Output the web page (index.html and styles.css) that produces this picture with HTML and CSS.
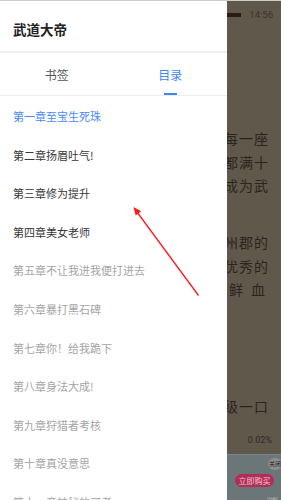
FILE: index.html
```html
<!DOCTYPE html>
<html>
<head>
<meta charset="utf-8">
<link rel="stylesheet" href="styles.css">
</head>
<body>

<div class="screen">
  <aside class="drawer">
    <div class="book-title">武道大帝</div>
    <div class="tabs">
      <div class="tab"><span class="tab-label">书签</span><span class="tab-bar"></span></div>
      <div class="tab active"><span class="tab-label">目录</span><span class="tab-bar"></span></div>
    </div>
    <ul class="chapters">
      <li class="current">第一章至宝生死珠</li>
      <li class="read">第二章扬眉吐气!</li>
      <li class="read">第三章修为提升</li>
      <li class="read">第四章美女老师</li>
      <li>第五章不让我进我便打进去</li>
      <li>第六章暴打黑石碑</li>
      <li>第七章你！给我跪下</li>
      <li>第八章身法大成!</li>
      <li>第九章狩猎者考核</li>
      <li>第十章真没意思</li>
      <li>第十一章神秘的买者</li>
    </ul>
  </aside>

  <main class="reader">
    <div class="status">
      <span class="battery"></span>
      <span class="clock">14:56</span>
    </div>

    <div class="para first">
      <div class="line"><span>城中每一座</span></div>
      <div class="line"><span>都满十</span></div>
      <div class="line"><span>够成为武</span></div>
    </div>
    <div class="para second">
      <div class="line"><span>九州郡的</span></div>
      <div class="line"><span>优秀的</span></div>
      <div class="line"><span class="spread">的鲜血</span></div>
    </div>
    <div class="para third">
      <div class="line"><span>一级一口</span></div>
    </div>

    <div class="progress">0.02%</div>

    <div class="ad">
      <span class="ad-close">关闭</span>
      <span class="ad-buy">立即购买</span>
      <span class="ad-tag">广告</span>
    </div>
  </main>

  <!-- annotation arrow drawn over the screenshot -->
  <svg class="arrow" width="281" height="500" viewBox="0 0 281 500">
    <line x1="198.5" y1="295.5" x2="137" y2="212" stroke="#ff1a1a" stroke-width="1.3"/>
    <polygon points="133.5,207 141.2,211.2 135.6,215.6" fill="#ff1a1a"/>
  </svg>
</div>

</body>
</html>
```

FILE: styles.css
```css
* {
    box-sizing: border-box;
}

body {
    margin: 0;
    background: #5f584b;
    font-family: "Noto Sans CJK SC", "Noto Sans", sans-serif;
}

.screen {
    position: relative;
    display: flex;
    width: 281px;
    height: 500px;
    overflow: hidden;
    border-top: 1px solid #cdcdcd;
}

/* drawer */
.drawer {
    width: 227px;
    flex-shrink: 0;
    display: flex;
    flex-direction: column;
    background: #ffffff;
    overflow: hidden;
}

.book-title {
    flex-shrink: 0;
    height: 52px;
    padding: 6px 13px 0;
    display: flex;
    align-items: center;
    font-size: 13.5px;
    font-weight: bold;
    color: #222222;
    border-bottom: 2px solid #efefef;
}

.tabs {
    flex-shrink: 0;
    display: flex;
    height: 43px;
    border-bottom: 1px solid #ececec;
}

.tab {
    flex: 1;
    display: flex;
    flex-direction: column;
    align-items: center;
}

.tab-label {
    flex: 1;
    display: flex;
    align-items: center;
    padding-top: 2px;
    font-size: 12px;
    color: #555555;
}

.tab-bar {
    width: 13px;
    height: 2px;
    background: transparent;
}

.tab.active .tab-label {
    color: #3f86f4;
}

.tab.active .tab-bar {
    background: #3f86f4;
}

.chapters {
    flex-shrink: 0;
    list-style: none;
    margin: 0;
    padding: 1px 0 0;
}

.chapters li {
    height: 38.6px;
    line-height: 38.6px;
    padding-left: 13px;
    font-size: 11px;
    color: #a5a5a5;
    white-space: nowrap;
}

.chapters li.current {
    color: #4a8af4;
}

.chapters li.read {
    color: #383838;
}

/* reading page behind the dim */
.reader {
    flex: 1;
    min-width: 0;
    display: flex;
    flex-direction: column;
    overflow: hidden;
    color: #2b251d;
}

.status {
    flex-shrink: 0;
    height: 27px;
    display: flex;
    justify-content: flex-end;
    align-items: center;
    padding-right: 8px;
    gap: 8px;
}

.battery {
    width: 15px;
    height: 4px;
    background: #2a1c12;
}

.clock {
    font-family: Roboto, "Noto Sans", sans-serif;
    font-size: 9.5px;
    color: #3b352c;
}

.para {
    flex-shrink: 0;
    font-size: 14px;
    line-height: 23.5px;
    letter-spacing: 1px;
}

.para.first {
    margin-top: 99px;
}

.para.second {
    margin-top: 33.5px;
}

.para.third {
    margin-top: 93.5px;
}

.line {
    display: flex;
    justify-content: flex-end;
    padding-right: 12px;
    white-space: nowrap;
}

.spread {
    letter-spacing: 8px;
    margin-right: -4px;
}

.progress {
    flex-shrink: 0;
    margin-top: 15px;
    padding-right: 9px;
    text-align: right;
    font-family: Roboto, "Noto Sans", sans-serif;
    font-size: 9px;
    line-height: 12px;
    color: #2f2a22;
}

.ad {
    margin-top: 8px;
    flex: 1;
    display: flex;
    flex-direction: column;
    align-items: flex-end;
    padding-top: 3px;
    background: #6b7678;
    border-top: 1px solid #7b8486;
}

.ad-close {
    width: 14px;
    height: 12px;
    margin-right: -1px;
    border-radius: 6px;
    background: #8c8c8c;
    font-size: 6px;
    line-height: 12px;
    text-align: center;
    color: #222222;
    overflow: hidden;
}

.ad-buy {
    margin-top: 4px;
    margin-right: 7px;
    width: 39px;
    height: 13px;
    border-radius: 7px;
    background: #b22d58;
    color: #f3c6d3;
    font-size: 8px;
    line-height: 13px;
    text-align: center;
}

.ad-tag {
    margin-top: 10px;
    margin-right: 3px;
    width: 11px;
    height: 6px;
    background: #80878a;
    color: #b7bcbd;
    font-size: 4px;
    line-height: 6px;
    text-align: center;
    overflow: hidden;
}

.arrow {
    position: absolute;
    left: 0;
    top: -1px;
}
```
